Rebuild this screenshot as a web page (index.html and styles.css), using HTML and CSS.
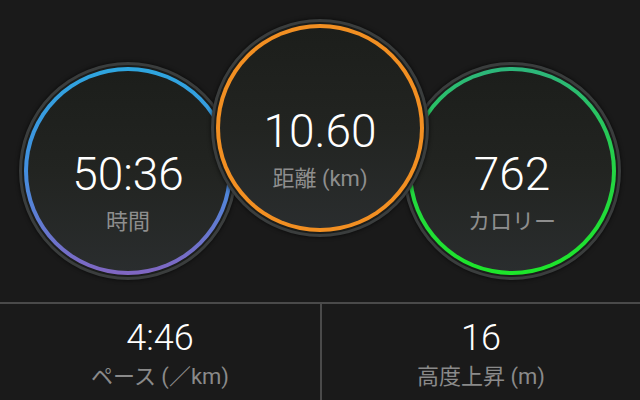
FILE: index.html
```html
<!DOCTYPE html>
<html lang="ja">
<head>
    <meta charset="UTF-8">
    <meta name="viewport" content="width=device-width, initial-scale=1.0">
    <title>アクティビティ</title>
    <link rel="stylesheet" href="styles.css">
</head>
<body>

    <div class="summary">
        <div class="circle side">
            <div class="ring time">
                <div class="face">
                    <div class="value">50:36</div>
                    <div class="label">時間</div>
                </div>
            </div>
        </div>
        <div class="circle main">
            <div class="ring distance">
                <div class="face">
                    <div class="value">10.60</div>
                    <div class="label">距離 (km)</div>
                </div>
            </div>
        </div>
        <div class="circle side">
            <div class="ring calories">
                <div class="face">
                    <div class="value">762</div>
                    <div class="label">カロリー</div>
                </div>
            </div>
        </div>
    </div>

    <div class="stats">
        <div class="stat">
            <div class="stat-value">4:46</div>
            <div class="stat-label">ペース (／km)</div>
        </div>
        <div class="stat divided">
            <div class="stat-value">16</div>
            <div class="stat-label">高度上昇 (m)</div>
        </div>
    </div>

</body>
</html>
```

FILE: styles.css
```css
body {
    margin: 0;
    padding: 0;
    background-color: #1a1a1a;
    font-family: Roboto, "Noto Sans CJK JP", sans-serif;
    width: 640px;
    height: 400px;
    overflow: hidden;
}
.summary {
    display: flex;
    justify-content: center;
    align-items: flex-start;
    height: 302px;
    padding-top: 19px;
    box-sizing: border-box;
}
.circle {
    width: 218px;
    height: 218px;
    box-sizing: border-box;
    border-radius: 50%;
    border: 3px solid #3a3d3d;
    padding: 2px;
    background-color: #1b1d1b;
    box-shadow: 0 0 4px rgba(0, 0, 0, 0.7);
    flex-shrink: 0;
}
.side {
    margin-top: 43px;
}
.main {
    margin-left: -26px;
    margin-right: -26px;
    position: relative;
    z-index: 2;
}
.ring {
    width: 100%;
    height: 100%;
    box-sizing: border-box;
    border-radius: 50%;
    padding: 4px;
}
.time {
    background: linear-gradient(to bottom, #2ea6df 0%, #438fe0 50%, #8166c2 100%);
}
.distance {
    background: #f28f22;
}
.calories {
    background: linear-gradient(to bottom, #2db67c 0%, #24d444 50%, #1de62a 100%);
}
.face {
    width: 100%;
    height: 100%;
    box-sizing: border-box;
    border-radius: 50%;
    background: linear-gradient(to bottom, #1c1e1b 0%, #222421 50%, #2a2d2e 100%);
    display: flex;
    flex-direction: column;
    align-items: center;
    justify-content: center;
    padding-top: 42px;
}
.value {
    color: #ffffff;
    font-weight: 300;
    font-size: 46px;
    line-height: 1;
}
.label {
    color: #8e8e8e;
    font-size: 22px;
    line-height: 1;
    margin-top: 14px;
    white-space: nowrap;
}
.stats {
    display: grid;
    grid-template-columns: 1fr 1fr;
    border-top: 2px solid #4a4a4a;
    height: 98px;
    box-sizing: border-box;
}
.stat {
    display: flex;
    flex-direction: column;
    align-items: center;
    padding-top: 16px;
}
.divided {
    border-left: 2px solid #4a4a4a;
}
.stat-value {
    color: #ffffff;
    font-weight: 300;
    font-size: 36px;
    line-height: 1;
}
.stat-label {
    color: #8a8a8a;
    font-size: 22px;
    line-height: 1;
    margin-top: 10px;
    white-space: nowrap;
}
```
